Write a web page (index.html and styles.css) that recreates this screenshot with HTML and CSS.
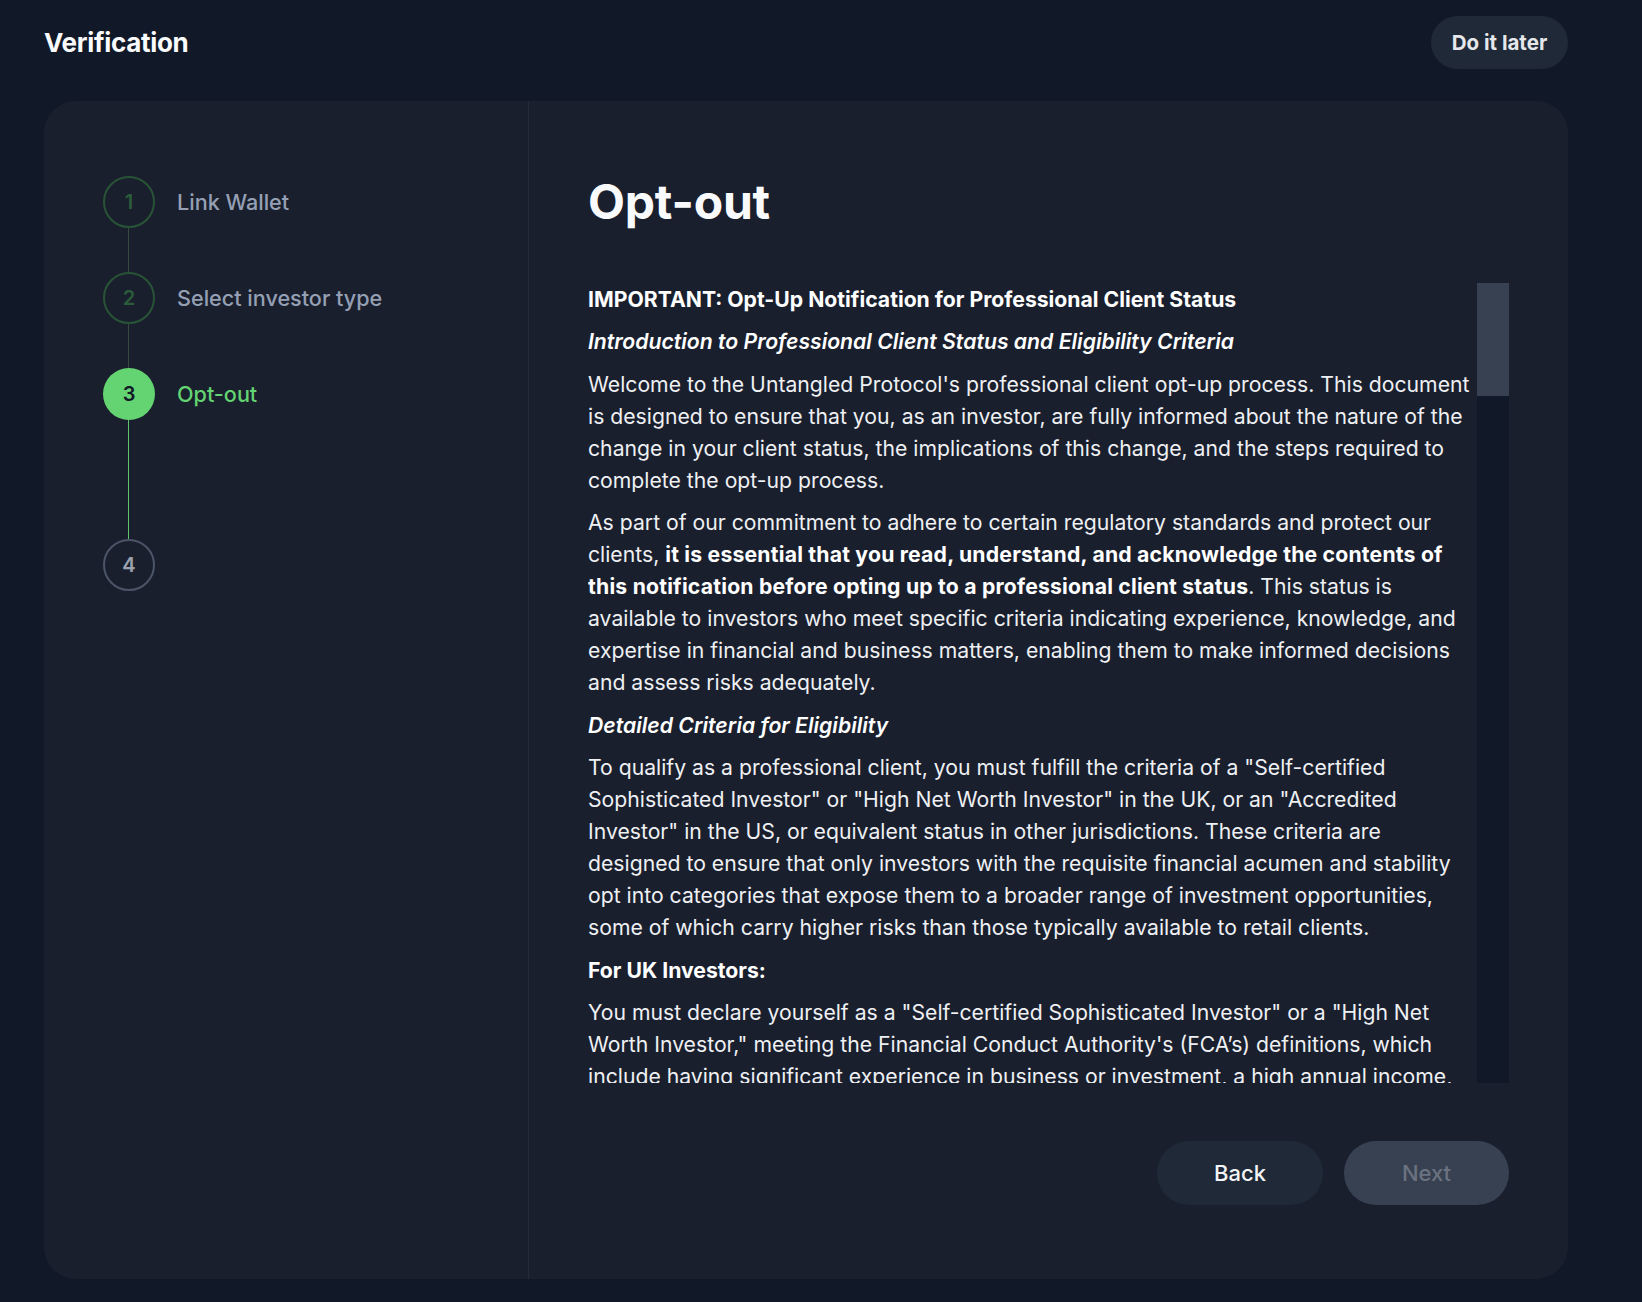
FILE: index.html
```html
<!DOCTYPE html>
<html lang="en">
<head>
<meta charset="utf-8">
<title>Verification</title>
<link rel="stylesheet" href="styles.css">
</head>
<body>
<div class="page">
  <header class="topbar">
    <h1 class="title">Verification</h1>
    <button class="later-btn" type="button">Do it later</button>
  </header>

  <main class="card">
    <aside class="steps">
      <div class="step done">
        <span class="circle">1</span>
        <span class="label">Link Wallet</span>
      </div>
      <div class="connector done"></div>
      <div class="step done">
        <span class="circle">2</span>
        <span class="label">Select investor type</span>
      </div>
      <div class="connector done"></div>
      <div class="step active">
        <span class="circle">3</span>
        <span class="label">Opt-out</span>
      </div>
      <div class="connector active long"></div>
      <div class="step todo">
        <span class="circle">4</span>
      </div>
    </aside>

    <section class="content">
      <h2 class="heading">Opt-out</h2>

      <div class="doc-wrap">
        <div class="doc">
          <p class="doc-title">IMPORTANT: Opt-Up Notification for Professional Client Status</p>
          <p class="doc-sub">Introduction to Professional Client Status and Eligibility Criteria</p>
          <p>Welcome to the Untangled Protocol's professional client opt-up process. This document is designed to ensure that you, as an investor, are fully informed about the nature of the change in your client status, the implications of this change, and the steps required to complete the opt-up process.</p>
          <p>As part of our commitment to adhere to certain regulatory standards and protect our clients, <strong>it is essential that you read, understand, and acknowledge the contents of this notification before opting up to a professional client status</strong>. This status is available to investors who meet specific criteria indicating experience, knowledge, and expertise in financial and business matters, enabling them to make informed decisions and assess risks adequately.</p>
          <p class="doc-sub">Detailed Criteria for Eligibility</p>
          <p>To qualify as a professional client, you must fulfill the criteria of a "Self-certified Sophisticated Investor" or "High Net Worth Investor" in the UK, or an "Accredited Investor" in the US, or equivalent status in other jurisdictions. These criteria are designed to ensure that only investors with the requisite financial acumen and stability opt into categories that expose them to a broader range of investment opportunities, some of which carry higher risks than those typically available to retail clients.</p>
          <p class="doc-strong">For UK Investors:</p>
          <p>You must declare yourself as a "Self-certified Sophisticated Investor" or a "High Net Worth Investor," meeting the Financial Conduct Authority's (FCA’s) definitions, which include having significant experience in business or investment, a high annual income, or substantial net assets.</p>
          <p class="doc-strong">For US Investors:</p>
          <p>You must qualify as an "Accredited Investor" as defined by the Securities and Exchange Commission (SEC), which includes meeting certain income or net worth thresholds, or holding specific professional certifications.</p>
        </div>
        <div class="scrollbar">
          <div class="thumb"></div>
        </div>
      </div>

      <div class="actions">
        <button class="btn btn-back" type="button">Back</button>
        <button class="btn btn-next" type="button" disabled>Next</button>
      </div>
    </section>
  </main>
</div>
</body>
</html>
```
FILE: styles.css
```css
* {
  box-sizing: border-box;
}

html, body {
  margin: 0;
  padding: 0;
}

body {
  background: #111827;
  font-family: Inter, "Noto Sans", "Liberation Sans", sans-serif;
  color: #e5e7eb;
  width: 1642px;
  height: 1302px;
  overflow: hidden;
}

.page {
  padding: 16px 74px 23px 44px;
}

.topbar {
  display: flex;
  align-items: center;
  justify-content: space-between;
  height: 53px;
  margin-bottom: 32px;
}

.title {
  margin: 0;
  font-size: 26px;
  font-weight: 700;
  color: #f9fafb;
  letter-spacing: -0.3px;
}

.later-btn {
  height: 53px;
  width: 137px;
  border: none;
  border-radius: 27px;
  background: #1f2937;
  color: #e5e7eb;
  font-family: inherit;
  font-size: 20.5px;
  font-weight: 700;
  padding: 0;
}

.card {
  display: flex;
  height: 1178px;
  background: #1a1f2e;
  border-radius: 32px;
  overflow: hidden;
}

/* Steps */
.steps {
  width: 485px;
  flex: none;
  padding: 75px 0 0 59px;
  border-right: 1px solid #232b3a;
  display: flex;
  flex-direction: column;
}

.step {
  display: flex;
  align-items: center;
  gap: 22px;
  height: 52px;
}

.circle {
  width: 52px;
  height: 52px;
  flex: none;
  border-radius: 50%;
  display: flex;
  align-items: center;
  justify-content: center;
  font-size: 20px;
  font-weight: 600;
}

.label {
  font-size: 21.6px;
  font-weight: 500;
  color: #95a0b4;
}

.step.done .circle {
  border: 2px solid #285436;
  color: #2b5d3a;
}

.step.active .circle {
  background: #63d471;
  color: #111827;
}

.step.active .label {
  color: #63d471;
}

.step.todo .circle {
  border: 2px solid #4b5567;
  color: #9ca3af;
}

.connector {
  width: 1px;
  height: 44px;
  margin-left: 25px;
  background: #34493f;
}

.connector.active {
  background: #5cc46a;
}

.connector.long {
  height: 119px;
}

/* Content */
.content {
  flex: 1;
  min-width: 0;
  padding: 72px 59px 74px 59px;
  display: flex;
  flex-direction: column;
}

.heading {
  margin: 0 0 52px;
  font-size: 48px;
  line-height: 1.2;
  font-weight: 700;
  color: #f9fafb;
  letter-spacing: -0.2px;
}

.doc-wrap {
  flex: 1;
  min-height: 0;
  display: flex;
}

.doc {
  flex: 1;
  min-width: 0;
  overflow: hidden;
  font-size: 21.2px;
  line-height: 32px;
  color: #eef0f3;
}

.doc p {
  margin: 0 0 10.5px;
}

.doc strong {
  font-weight: 700;
  color: #ffffff;
  letter-spacing: 0.2px;
}

.doc .doc-title {
  font-weight: 700;
  color: #ffffff;
}

.doc .doc-sub {
  font-weight: 600;
  font-style: italic;
  color: #ffffff;
}

.doc .doc-strong {
  font-weight: 700;
  color: #ffffff;
}

.scrollbar {
  width: 32px;
  flex: none;
  background: #111827;
}

.thumb {
  height: 113px;
  background: #374151;
}

.actions {
  margin-top: 58px;
  display: flex;
  justify-content: flex-end;
  gap: 21px;
}

.btn {
  width: 165px;
  height: 64px;
  border: none;
  border-radius: 32px;
  font-family: inherit;
  font-size: 22px;
  font-weight: 500;
  padding: 0;
}

.btn-back {
  width: 166px;
  background: #1f2937;
  color: #f3f4f6;
}

.btn-next {
  background: #374151;
  color: #6b7280;
}
```
